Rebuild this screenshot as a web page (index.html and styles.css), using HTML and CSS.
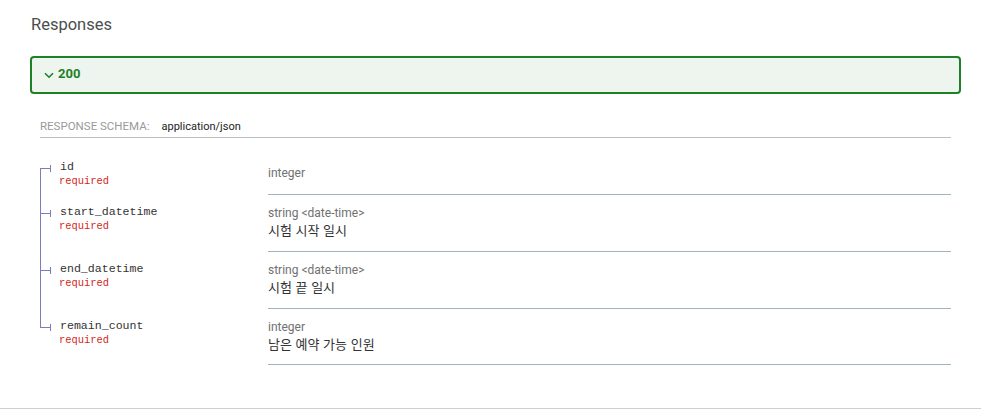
FILE: index.html
```
<!DOCTYPE html>
<html lang="ko">
<head>
<meta charset="utf-8">
<title>Responses</title>
<link rel="stylesheet" href="styles.css">
</head>
<body>
<section class="responses">
  <h3 class="responses-title">Responses</h3>
  <button class="response-btn" type="button">
    <svg class="chevron" width="10" height="7" viewBox="0 0 10 7"><polyline points="1,1.2 5,5.2 9,1.2" fill="none" stroke="#1d8127" stroke-width="1.6"/></svg>
    <strong>200</strong>
  </button>
  <div class="response-body">
    <div class="schema-header">
      <span class="schema-label">Response Schema:</span>
      <span class="schema-type">application/json</span>
    </div>
    <div class="props">
      <div class="prop first">
        <div class="prop-name">
          <div class="name-line"><span class="stub"><i class="h"></i><i class="v"></i></span><span class="name">id</span></div>
          <div class="required">required</div>
        </div>
        <div class="prop-details">
          <div class="type">integer</div>
        </div>
      </div>
      <div class="prop">
        <div class="prop-name">
          <div class="name-line"><span class="stub"><i class="h"></i><i class="v"></i></span><span class="name">start_datetime</span></div>
          <div class="required">required</div>
        </div>
        <div class="prop-details">
          <div class="type">string &lt;date-time&gt;</div>
          <div class="desc">시험 시작 일시</div>
        </div>
      </div>
      <div class="prop">
        <div class="prop-name">
          <div class="name-line"><span class="stub"><i class="h"></i><i class="v"></i></span><span class="name">end_datetime</span></div>
          <div class="required">required</div>
        </div>
        <div class="prop-details">
          <div class="type">string &lt;date-time&gt;</div>
          <div class="desc">시험 끝 일시</div>
        </div>
      </div>
      <div class="prop last">
        <div class="prop-name">
          <div class="name-line"><span class="stub"><i class="h"></i><i class="v"></i></span><span class="name">remain_count</span></div>
          <div class="required">required</div>
        </div>
        <div class="prop-details">
          <div class="type">integer</div>
          <div class="desc">남은 예약 가능 인원</div>
        </div>
      </div>
    </div>
  </div>
</section>
</body>
</html>
```
FILE: styles.css
```
html, body {
  margin: 0;
  padding: 0;
  background: #fff;
}
body {
  font-family: Roboto, "Noto Sans CJK KR", sans-serif;
  color: #333;
}
.responses {
  padding: 0 20px 43px 30px;
  border-bottom: 1px solid #cfcfcf;
}
.responses-title {
  margin: 15px 0 21px 1px;
  font-size: 16.5px;
  line-height: 20px;
  font-weight: 400;
  color: #4d4d4d;
}
.response-btn {
  display: flex;
  align-items: center;
  gap: 4px;
  width: 100%;
  box-sizing: border-box;
  height: 38px;
  margin: 0;
  padding: 0 12px 3px 12px;
  border: 2px solid #1d8127;
  border-radius: 4px;
  background: #edf5ee;
  color: #1d8127;
  font-family: Roboto, sans-serif;
  font-size: 13px;
  line-height: 20px;
  text-align: left;
}
.response-btn strong {
  font-weight: 700;
}
.chevron {
  display: block;
  margin-top: 3px;
}
.response-body {
  padding: 0 10px;
}
.schema-header {
  display: flex;
  align-items: baseline;
  gap: 12px;
  margin-top: 24px;
  padding-bottom: 2px;
  border-bottom: 1px solid #bcc0c4;
  line-height: 17px;
}
.schema-label {
  font-size: 11.5px;
  text-transform: uppercase;
  color: #9a9a9a;
}
.schema-type {
  font-size: 11px;
  color: #222;
}
.props {
  margin-top: 12px;
}
.prop {
  display: grid;
  grid-template-columns: 228px 1fr;
}
.prop-name {
  padding: 9px 0 8px;
  background: linear-gradient(#7c7cbb, #7c7cbb) no-repeat 0 0 / 1px 100%;
}
.prop.first .prop-name {
  background-position: 0 18px;
}
.prop.last .prop-name {
  background-size: 1px 18px;
}
.name-line {
  display: flex;
  align-items: flex-start;
  font-family: "Liberation Mono", monospace;
  font-size: 11.6px;
  line-height: 16px;
  color: #333;
}
.stub {
  display: flex;
  align-items: center;
  height: 7px;
  margin-top: 6px;
  margin-right: 9px;
}
.stub .h {
  display: block;
  width: 10px;
  height: 1px;
  background: #7c7cbb;
}
.stub .v {
  display: block;
  width: 1px;
  height: 7px;
  background: #7c7cbb;
}
.required {
  padding-left: 19px;
  font-family: "Liberation Mono", monospace;
  font-size: 10.4px;
  line-height: 12px;
  color: #d41f1c;
}
.prop-details {
  display: flex;
  flex-direction: column;
  justify-content: center;
  padding: 11px 0 11px;
  border-bottom: 1px solid #9fb4be;
}
.prop.first .prop-details {
  padding: 9px 0 8px;
}
.prop.last .prop-details {
  padding-bottom: 10px;
}
.type {
  font-size: 12px;
  line-height: 14px;
  color: #707070;
}
.desc {
  font-family: "Noto Sans CJK KR", sans-serif;
  font-size: 13px;
  line-height: 20px;
  color: #333;
}
```
